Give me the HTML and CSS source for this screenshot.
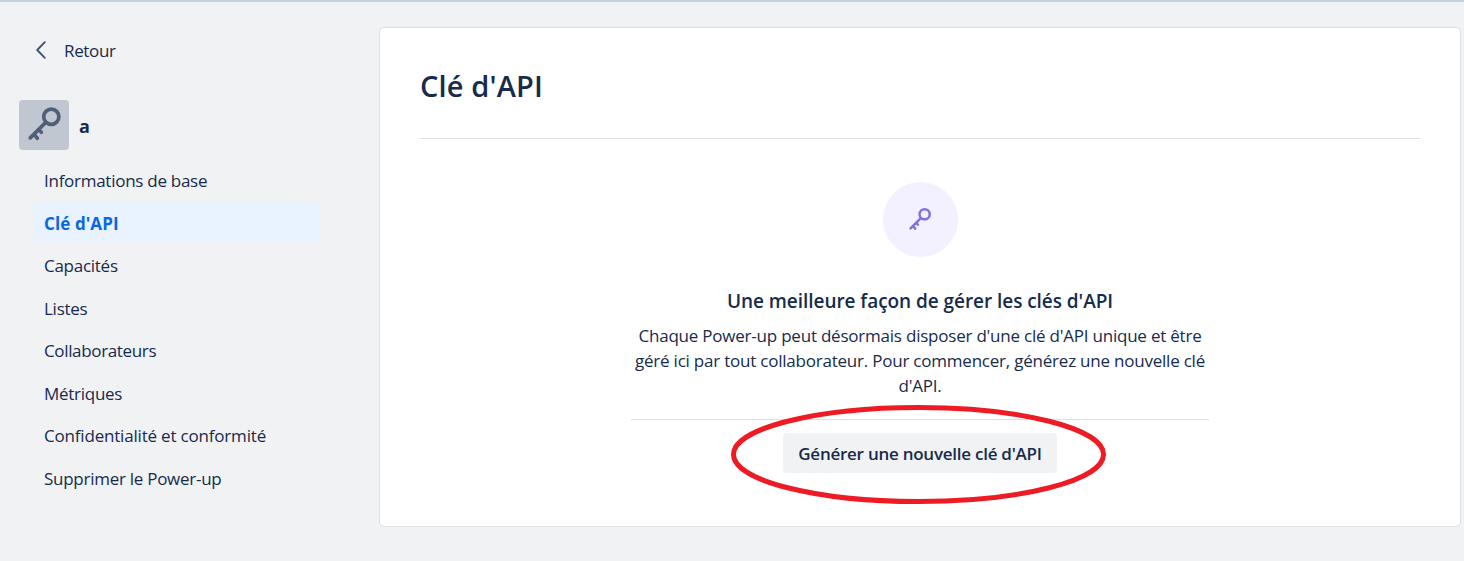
FILE: index.html
```html
<!DOCTYPE html>
<html lang="fr">
<head>
<meta charset="utf-8">
<title>Clé d'API</title>
<link rel="stylesheet" href="styles.css">
</head>
<body>
<svg class="defs" width="0" height="0" aria-hidden="true">
  <symbol id="key" viewBox="0 0 50 50">
    <g fill="none" stroke="currentColor" stroke-width="3.7" stroke-linecap="round" stroke-linejoin="round">
      <circle cx="32.3" cy="16.8" r="7.6"/>
      <path d="M26.6 22.5 11.3 37.9M19.4 29.6l2.9 2.6M15 34.4l3.3 3.9"/>
    </g>
  </symbol>
</svg>
<div class="page">
  <aside class="sidebar">
    <a class="back">
      <svg class="back-icon" width="12" height="20" viewBox="0 0 12 20"><path d="M9.8 2.2 2.2 10l7.6 7.8" fill="none" stroke="currentColor" stroke-width="1.9" stroke-linecap="round" stroke-linejoin="round"/></svg>
      <span>Retour</span>
    </a>
    <div class="app">
      <span class="app-icon"><svg width="50" height="50"><use href="#key"/></svg></span>
      <span class="app-name">a</span>
    </div>
    <nav class="nav">
      <a class="nav-item">Informations de base</a>
      <a class="nav-item active">Clé d'API</a>
      <a class="nav-item">Capacités</a>
      <a class="nav-item">Listes</a>
      <a class="nav-item tight">Collaborateurs</a>
      <a class="nav-item">Métriques</a>
      <a class="nav-item loose">Confidentialité et conformité</a>
      <a class="nav-item">Supprimer le Power-up</a>
    </nav>
  </aside>
  <main class="card">
    <h1 class="title">Clé d'API</h1>
    <section class="empty">
      <span class="badge"><svg width="33.5" height="33.5"><use href="#key"/></svg></span>
      <h2 class="subtitle">Une meilleure façon de gérer les clés d'API</h2>
      <p class="text">Chaque Power-up peut désormais disposer d'une clé d'API unique et être<br>géré ici par tout collaborateur. Pour commencer, générez une nouvelle clé<br>d'API.</p>
      <div class="actions">
        <button class="button">Générer une nouvelle clé d'API</button>
        <svg class="highlight" width="376" height="100" viewBox="0 0 376 100"><ellipse cx="187.5" cy="49.5" rx="185" ry="47" fill="none" stroke="#ed1c24" stroke-width="5"/></svg>
      </div>
    </section>
  </main>
</div>
</body>
</html>
```
FILE: styles.css
```css
* { box-sizing: border-box; }
body {
  margin: 0;
  background: #f1f2f4;
  color: #172b4d;
  font: 400 17px/25px "Open Sans", "Noto Sans", sans-serif;
  letter-spacing: -0.35px;
}
.defs { display: none; }
.page {
  display: flex;
  height: 561px;
  border-top: 2px solid #c5d0e0;
  overflow: hidden;
}
.sidebar { width: 379px; flex: none; padding: 36px 0 0 19px; }
.back { display: flex; align-items: center; height: 25px; padding-left: 16px; gap: 17px; }
.back-icon { color: #44546f; position: relative; top: -1px; }
.app { display: flex; margin-top: 37px; gap: 10px; align-items: center; }
.app-icon {
  width: 50px; height: 50px;
  border-radius: 4px;
  background: #c1c7d1;
  color: #505f79;
}
.app-icon svg { display: block; }
.app-name { font-size: 18px; font-weight: 700; padding-top: 2px; }
.nav { display: flex; flex-direction: column; gap: 2.5px; margin: 9px 0 0 15px; width: 286px; }
.nav-item {
  height: 40px;
  line-height: 43px;
  padding-left: 10px;
  border-radius: 4px;
  letter-spacing: -0.27px;
  white-space: nowrap;
}
.tight { letter-spacing: -0.35px; }
.loose { letter-spacing: -0.19px; }
.active { background: #e9f2ff; color: #0c66e4; font-weight: 700; letter-spacing: 0.1px; }
.card {
  width: 1082px; height: 500px;
  flex: none;
  margin-top: 25px;
  padding: 0 40px;
  background: #fff;
  border: 1px solid #dcdfe4;
  border-radius: 5px;
}
.title {
  margin: 0;
  height: 111px;
  padding-top: 38px;
  border-bottom: 1px solid #dcdfe4;
  font-size: 29px;
  line-height: 40px;
  font-weight: 600;
  letter-spacing: 0.15px;
}
.empty { display: flex; flex-direction: column; align-items: center; width: 578px; margin: 43px auto 0; }
.badge {
  display: flex; align-items: center; justify-content: center;
  width: 75px; height: 75px;
  border-radius: 50%;
  background: #f3f0ff;
  color: #8270db;
}
.subtitle { margin: 31px 0 0; font-size: 19px; line-height: 26px; font-weight: 600; letter-spacing: -0.05px; white-space: nowrap; }
.text { margin: 9px 0 0; text-align: center; letter-spacing: -0.22px; white-space: nowrap; }
.actions {
  position: relative;
  display: flex;
  justify-content: center;
  width: 578px;
  margin-top: 21px;
  padding-top: 13px;
  border-top: 1px solid #dcdfe4;
}
.button {
  width: 274px; height: 40px;
  padding: 0;
  border: 0;
  border-radius: 4px;
  background: #f1f2f4;
  color: #172b4d;
  font: inherit;
  font-weight: 600;
  letter-spacing: -0.25px;
  white-space: nowrap;
}
.highlight { position: absolute; left: 100px; top: -15px; pointer-events: none; }
```
